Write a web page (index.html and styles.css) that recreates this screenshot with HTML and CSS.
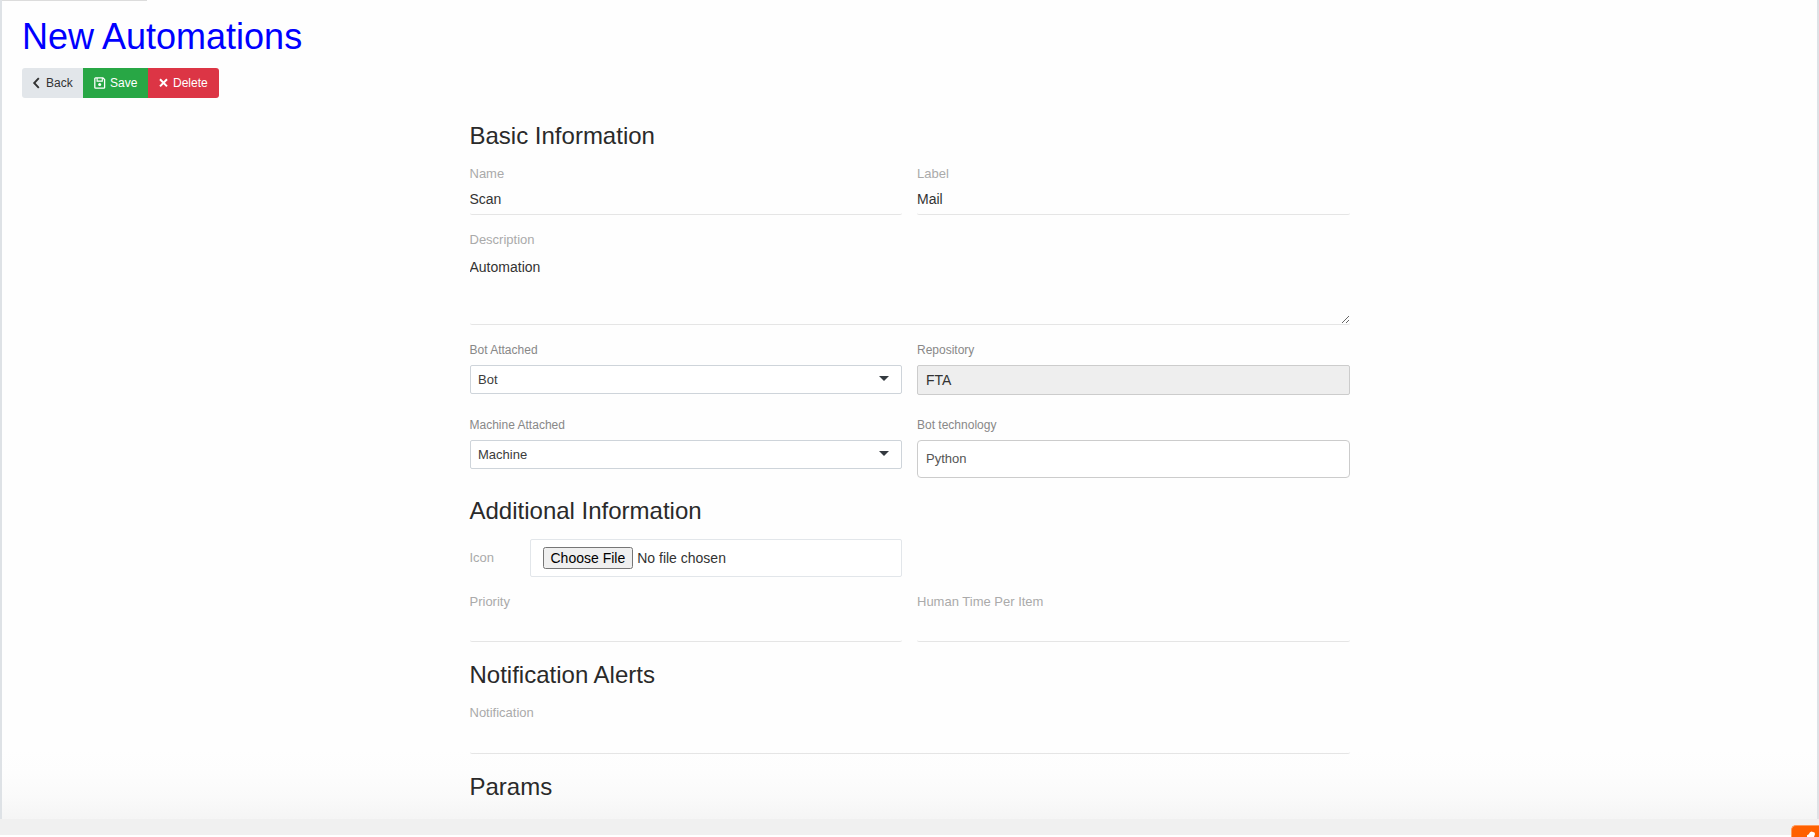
FILE: index.html
```html
<!DOCTYPE html>
<html lang="en">
<head>
<meta charset="utf-8">
<title>New Automations</title>
<link rel="stylesheet" href="styles.css">
</head>
<body>
<div class="page">
  <header class="page-header">
    <h1 class="page-title">New Automations</h1>
    <div class="btn-group">
      <button class="btn btn-back" type="button">
        <svg class="icon" width="8" height="12" viewBox="0 0 8 12"><path d="M6.800 1.200 2.200 6l4.600 4.800" fill="none" stroke="currentColor" stroke-width="1.900"/></svg>
        Back
      </button>
      <button class="btn btn-save" type="button">
        <svg class="icon" width="12" height="12" viewBox="0 0 12 12" fill="none" stroke="currentColor" stroke-width="1.300"><path d="M1.600.9H8.900L10.600 2.600V10.400a.8.8 0 0 1-.8.8H1.600a.8.8 0 0 1-.8-.8V1.700a.8.8 0 0 1 .8-.8Z"/><path d="M3.100 1V4.100H8.300V1" stroke-width="1.100"/><circle cx="5.700" cy="7.600" r="1.500" fill="currentColor" stroke="none"/></svg>
        Save
      </button>
      <button class="btn btn-delete" type="button">
        <svg class="icon" width="9" height="12" viewBox="0 0 9 12"><path d="m1 2.200 7 7.200m0-7.200-7 7.200" fill="none" stroke="currentColor" stroke-width="2"/></svg>
        Delete
      </button>
    </div>
  </header>

  <form class="form">
    <h2 class="section-title">Basic Information</h2>
    <div class="row row-line">
      <div class="field"><label class="label">Name</label><input class="line-input" type="text" value="Scan"></div>
      <div class="field"><label class="label">Label</label><input class="line-input" type="text" value="Mail"></div>
    </div>
    <div class="field"><label class="label">Description</label><textarea class="line-input line-area">Automation</textarea></div>
    <div class="row row-attach">
      <div class="field"><label class="label label-small">Bot Attached</label><div class="select">Bot<span class="caret"></span></div></div>
      <div class="field"><label class="label label-small">Repository</label><input class="box-input box-disabled" type="text" value="FTA" readonly></div>
    </div>
    <div class="row row-machine">
      <div class="field"><label class="label label-small">Machine Attached</label><div class="select">Machine<span class="caret"></span></div></div>
      <div class="field"><label class="label label-small">Bot technology</label><input class="box-input box-tall" type="text" value="Python"></div>
    </div>

    <h2 class="section-title title-additional">Additional Information</h2>
    <div class="row">
      <div class="file-field"><label class="label file-label">Icon</label><div class="file-box"><input class="file-input" type="file"></div></div>
    </div>
    <div class="row row-priority">
      <div class="field"><label class="label">Priority</label><input class="line-input line-short" type="text"></div>
      <div class="field"><label class="label">Human Time Per Item</label><input class="line-input line-short" type="text"></div>
    </div>

    <h2 class="section-title title-alerts">Notification Alerts</h2>
    <div class="field"><label class="label">Notification</label><input class="line-input" type="text"></div>

    <h2 class="section-title title-params">Params</h2>
  </form>
</div>
<footer class="footer"></footer>
<div class="widget">
  <svg width="28" height="12" viewBox="0 0 28 12"><path d="M16 12V10.300L17.800 9.300 19 7.200 20.500 6.600 23.500 7.600 24 9 23 12Z" fill="#fff"/></svg>
</div>
</body>
</html>
```
FILE: styles.css
```css
* { box-sizing: border-box; }
html, body { height: 100%; }
body {
  margin: 0;
  overflow: hidden;
  background: #fff;
  color: #212529;
  font-family: "Liberation Sans", Arial, sans-serif;
}
.page {
  position: relative;
  height: 819px;
  overflow: hidden;
  border: solid #dee2e6;
  border-width: 0 2px;
  background: linear-gradient(#fefefe 750px, #fdfdfd 773px, #fafafa 797px, #f5f5f5 819px);
}
/* short loading bar along the top edge */
.page::before {
  content: "";
  position: absolute;
  top: 0;
  left: -2px;
  width: 147px;
  height: 1px;
  background: #dcdcdc;
}
.page-header { padding: 16px 20px 0; }
.page-title {
  margin: 0 0 11px;
  color: #00f;
  font-size: 36px;
  font-weight: 400;
  line-height: 41px;
}
.btn-group {
  display: flex;
  width: 197px;
  height: 30px;
  overflow: hidden;
  border-radius: 3px;
}
.btn {
  display: flex;
  align-items: center;
  gap: 6px;
  border: 0;
  padding: 0 0 0 11px;
  color: #fff;
  font: 12px/18px "Liberation Sans", Arial, sans-serif;
}
.icon { display: block; flex: none; }
.btn-back { width: 61px; padding-left: 10px; background: #e2e6ea; color: #333; }
.btn-save { width: 65px; gap: 4px; background: #28a745; }
.btn-delete { width: 71px; gap: 5px; background: #dc3545; }

.form {
  width: 880px;
  margin: 25px auto 0;
}
.section-title {
  margin: 0;
  color: #2a2a2a;
  font-size: 24px;
  font-weight: 400;
  line-height: 26px;
}
.row {
  display: grid;
  grid-template-columns: 1fr 1fr;
  column-gap: 15px;
  align-items: start;
}
.row-line { margin: 16px 0; }
.row-attach { margin-top: 17px; }
.row-machine { margin-top: 22px; }
.row-priority { margin-top: 16px; }
.title-additional { margin: 20px 0 15px; }
.title-alerts { margin: 20px 0 16px; }
.title-params { margin-top: 20px; }

.field { display: flex; flex-direction: column; }
.label { color: #aaa; font-size: 13px; line-height: 18px; }
.label-small { margin-bottom: 7px; color: #888; font-size: 12px; line-height: 16px; }
.line-input {
  width: 100%;
  height: 32px;
  border: 0;
  border-bottom: 1px solid #e5e5e5;
  border-radius: 2px;
  padding: 1px 0 0;
  background: transparent;
  color: #333;
  font: 14px/20px "Liberation Sans", Arial, sans-serif;
}
.line-short { height: 31px; }
.line-area {
  height: 76px;
  padding: 8px 0 0;
  resize: vertical;
}
.select {
  display: flex;
  justify-content: space-between;
  align-items: center;
  height: 29px;
  border: 1px solid #ced4da;
  border-radius: 2px;
  padding: 0 12px 0 7.500px;
  background: #fff;
  color: #3c3c3c;
  font-size: 13px;
}
.caret {
  margin-bottom: 2px;
  border: 5px solid transparent;
  border-top-color: #343a40;
  border-bottom: 0;
}
.box-input {
  width: 100%;
  height: 30px;
  border: 1px solid #ccc;
  border-radius: 2px;
  padding: 0 8px;
  background: #fff;
  color: #333;
  font: 14px "Liberation Sans", Arial, sans-serif;
}
.box-disabled { background: #eee; }
.box-tall { height: 38px; border-radius: 4px; padding-bottom: 1px; color: #555; font-size: 13px; }

.file-field { display: flex; align-items: center; }
.file-label { width: 60px; flex: none; }
.file-box {
  display: flex;
  align-items: center;
  flex: 1;
  height: 38px;
  border: 1px solid #e2e6ea;
  border-radius: 2px;
  padding-left: 12px;
  background: #fff;
}
.file-input { color: #333; font: 14px "Liberation Sans", Arial, sans-serif; }

.footer { height: 16px; background: #f0f0f0; }
/* floating chat launcher, partly below the fold */
.widget {
  position: absolute;
  right: 0;
  bottom: 0;
  width: 28px;
  height: 12px;
  overflow: hidden;
  border: solid #ff9a5c;
  border-width: 1px 0 0 1px;
  border-top-left-radius: 5px;
  background: #ff6000;
}
.widget svg { display: block; margin: -1px 0 0 -1px; }
```
